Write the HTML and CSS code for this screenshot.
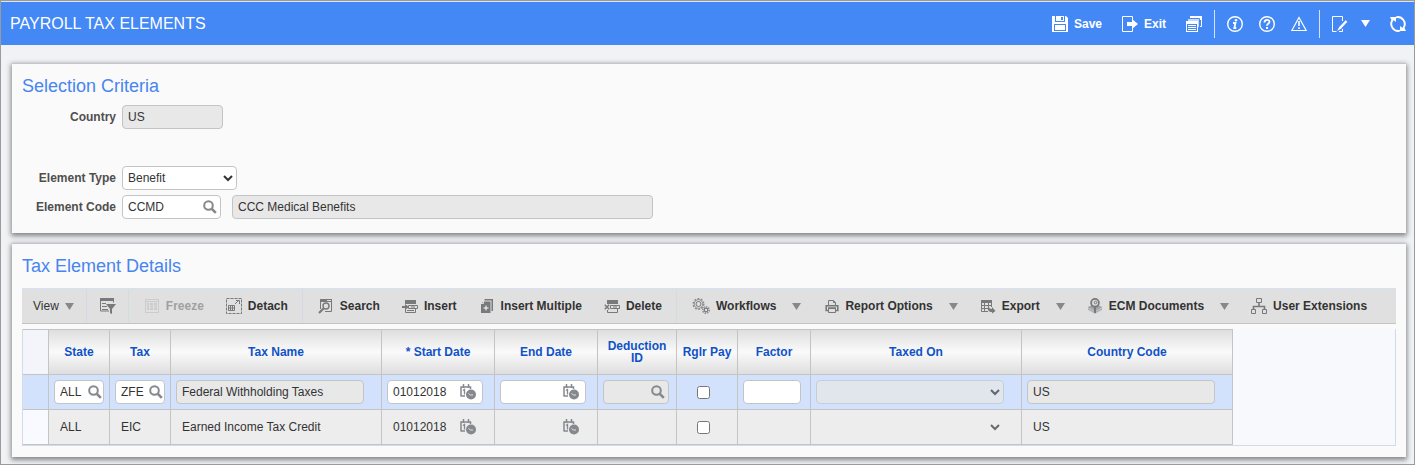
FILE: index.html
```html
<!DOCTYPE html>
<html lang="en">
<head>
  <meta charset="utf-8">
  <meta name="viewport" content="width=device-width, initial-scale=1">
  <title>Payroll Tax Elements</title>
  <link rel="stylesheet" href="styles.css">
</head>
<body>
  <!-- shared icons -->
  <svg class="defs" width="0" height="0">
    <symbol id="search" viewBox="0 0 14 14">
      <circle cx="5.5" cy="5.5" r="4.3" fill="none" stroke="currentColor" stroke-width="2"/>
      <path d="M8.8 8.8l4 4" stroke="currentColor" stroke-width="2.6"/>
    </symbol>
    <symbol id="calendar" viewBox="0 0 16 16">
      <path d="M1 12.500V3h9.500v2M1 12h4M3.500 0v4M8.500 0v4" fill="none" stroke="currentColor" stroke-width="1.500"/>
      <path d="M3 6.500l1.500-1v5" fill="none" stroke="currentColor" stroke-width="1.300"/>
      <circle cx="11" cy="10.500" r="5" fill="currentColor"/>
      <path d="M8.500 9.500l2 1.500h2.500" fill="none" stroke="#e0e2e4"/>
    </symbol>
    <symbol id="down" viewBox="0 0 9 7">
      <path d="M0 0h9L4.500 7z" fill="currentColor"/>
    </symbol>
  </svg>

  <header class="topbar">
    <h1>PAYROLL TAX ELEMENTS</h1>
    <nav class="actions">
      <button type="button" class="action">
        <svg width="16" height="16" viewBox="0 0 16 16"><path fill="#fff" d="M0 0h14l2 2v14H0z"/><path fill="#4388f5" d="M3 0h1v5h-1zM12 0h1v5h-1zM3 5h10v1H3zM9 1h2v3H9zM2 8h12v1H2zM2 9h1v6H2zM3 14h10v1H3zM13 9h1v6h-1z"/></svg>
        Save
      </button>
      <button type="button" class="action">
        <svg width="16" height="16" viewBox="0 0 16 16"><path d="M10.500 4V.5H.5v15h10V12" fill="none" stroke="#fff"/><path fill="#fff" d="M5 6h5V3l6 5-6 5v-3H5z"/></svg>
        Exit
      </button>
      <button type="button" class="action" aria-label="Windows">
        <svg width="16" height="16" viewBox="0 0 16 16"><path fill="#fff" d="M4 0h12v4H4z"/><path d="M14 10.500h1.500V4" fill="none" stroke="#fff"/><path fill="#c5dafc" d="M2 3h11v8H2z"/><path d="M2 2.500h11.500V12" fill="none" stroke="#4388f5"/><path fill="#fff" d="M0 5h12v11H0z"/><path fill="#4388f5" d="M1 8h10v7H1z"/><path d="M2 9.500h8M2 11.500h8M2 13.500h8" stroke="#fff"/></svg>
      </button>
      <span class="rule"></span>
      <button type="button" class="action" aria-label="Information">
        <svg width="16" height="16" viewBox="0 0 16 16"><circle cx="8" cy="8" r="7.300" fill="none" stroke="#fff" stroke-width="1.400"/><circle cx="9" cy="4.300" r="1.300" fill="#fff"/><path d="M6 7h2.500l-1.200 5h2" fill="none" stroke="#fff" stroke-width="1.800"/></svg>
      </button>
      <button type="button" class="action" aria-label="Help">
        <svg width="16" height="16" viewBox="0 0 16 16"><circle cx="8" cy="8" r="7.300" fill="none" stroke="#fff" stroke-width="1.400"/><path d="M5.500 6.500C5.500 3 10.700 3.200 10.500 6 10.400 7.500 8 7.700 8 9.800" fill="none" stroke="#fff" stroke-width="1.800"/><path d="M7 11h2v2H7z" fill="#fff"/></svg>
      </button>
      <button type="button" class="action" aria-label="Warnings">
        <svg width="16" height="16" viewBox="0 0 16 16"><path d="M8 1.500L15.200 14.500H.8z" fill="none" stroke="#fff" stroke-width="1.200"/><path d="M8 5v5M8 11.300v1.700" stroke="#fff" stroke-width="1.600"/></svg>
      </button>
      <span class="rule"></span>
      <button type="button" class="action more" aria-label="Edit page">
        <svg width="16" height="16" viewBox="0 0 16 16"><path d="M10.500 5V.5H.5v15h4M7 15.500h3.500V13" fill="none" stroke="#fff"/><path d="M14.500 5L8 12" stroke="#fff" stroke-width="2.400"/><path d="M7.500 10.500L5 15l4.500-2.500z" fill="#fff"/></svg>
        <svg width="9" height="7"><use href="#down"/></svg>
      </button>
      <button type="button" class="action" aria-label="Refresh">
        <svg width="16" height="16" viewBox="0 0 16 16"><path d="M6 1.300A7 7 0 0 1 13.500 12M10 14.700A7 7 0 0 1 2.500 4" fill="none" stroke="#fff" stroke-width="1.900"/><path d="M0 1h6v5L4 4.500 1.500 4zM16 15h-6v-5l2 1.500 2.500.5z" fill="#fff"/></svg>
      </button>
    </nav>
  </header>

  <main>
    <section class="panel criteria">
      <h2>Selection Criteria</h2>
      <div class="form-row country">
        <label for="country">Country</label>
        <input class="field" id="country" value="US" readonly>
      </div>
      <div class="form-row">
        <label for="type">Element Type</label>
        <select class="field" id="type"><option>Benefit</option></select>
      </div>
      <div class="form-row">
        <label for="code">Element Code</label>
        <div class="field lookup code">
          <input id="code" value="CCMD">
          <button type="button" aria-label="Find element code"><svg width="14" height="14"><use href="#search"/></svg></button>
        </div>
        <input class="field description" value="CCC Medical Benefits" aria-label="Element description" readonly>
      </div>
    </section>

    <section class="panel details">
      <h2>Tax Element Details</h2>
      <div class="toolbar">
        <button type="button" class="tool view">View <svg class="arrow" width="9" height="7"><use href="#down"/></svg></button>
        <span class="sep"></span>
        <button type="button" class="tool" aria-label="Query by example">
          <svg width="16" height="16" viewBox="0 0 16 16"><path d="M.5.500h13v4M.5 1v12H9" fill="none" stroke="currentColor"/><path d="M0 0h14v3H0z" fill="currentColor"/><path d="M2 5.500h4M2 8.500h5M2 11.500h6" stroke="currentColor"/><path d="M6 6h10l-4 5v5l-2-1v-4z" fill="currentColor"/></svg>
        </button>
        <span class="sep"></span>
        <button type="button" class="tool" disabled>
          <svg width="16" height="16" viewBox="0 0 16 16"><path d="M1.500 1.500h13v13h-13zM2 3.500h12" fill="none" stroke="currentColor"/><path d="M3 6h2M3 8.500h2M3 11h2M6 6h3M6 8.500h3M6 11h3M10 6h3M10 8.500h3M10 11h3" stroke="currentColor" stroke-width="2"/></svg>
          Freeze
        </button>
        <button type="button" class="tool">
          <svg width="16" height="16" viewBox="0 0 16 16"><path d="M.5.500h15v15H.5z" fill="none" stroke="currentColor" stroke-dasharray="3 1"/><path d="M2.500 7.500h6v5h-6zM2 10h7M4.500 7v6M6.500 7v6M9 6l4-4M10 2.500h3.500V6" fill="none" stroke="currentColor"/></svg>
          Detach
        </button>
        <span class="sep"></span>
        <button type="button" class="tool">
          <svg width="16" height="16" viewBox="0 0 16 16"><path d="M2.500 11V1.500h11v12H7" fill="none" stroke="currentColor"/><path d="M2 1h12v3H2z" fill="currentColor"/><path d="M9 2.500h4" stroke="#e0e0e0"/><circle cx="8" cy="8" r="3" fill="#e0e0e0" stroke="currentColor" stroke-width="1.400"/><path d="M5.500 10.500L1 15" stroke="currentColor" stroke-width="2.200"/></svg>
          Search
        </button>
        <button type="button" class="tool">
          <svg width="16" height="16" viewBox="0 0 16 16"><path d="M3 2h11v4H3z" fill="currentColor"/><path d="M6.500 7.500h9v3h-9zM3.500 11v3.500h10V11M9 9h4M5 12.500h7" fill="none" stroke="currentColor"/><path d="M0 8h3V6l4 3-4 3v-2H0z" fill="currentColor"/></svg>
          Insert
        </button>
        <button type="button" class="tool">
          <svg width="16" height="16" viewBox="0 0 16 16"><path d="M5.500 1H14v12h-1.500V2.500h-7z" fill="currentColor"/><path d="M4.500 3.500h7V15H2V6z" fill="currentColor"/><path d="M7 7.500v5M4.500 10h5" stroke="#fff"/><path d="M2 5.500h2.500V3" stroke="#e0e0e0" fill="none"/></svg>
          Insert Multiple
        </button>
        <button type="button" class="tool">
          <svg width="16" height="16" viewBox="0 0 16 16"><path d="M3 2h11v4H3z" fill="currentColor"/><path d="M6.500 7.500h9v3h-9zM3.500 12v2.500h10V11M9 9h4" fill="none" stroke="currentColor"/><path d="M.8 6.800l4.400 4.400M5.200 6.800L.8 11.200" stroke="currentColor" stroke-width="1.500"/></svg>
          Delete
        </button>
        <span class="sep"></span>
        <button type="button" class="tool">
          <svg width="18" height="16" viewBox="0 0 18 16"><circle cx="6.500" cy="6" r="5.200" fill="none" stroke="currentColor" stroke-width="1.600" stroke-dasharray="1.800 1.470" opacity=".8"/><circle cx="6.500" cy="6" r="4.300" fill="none" stroke="currentColor" opacity=".7"/><circle cx="6.500" cy="6" r="2.500" fill="none" stroke="currentColor"/><circle cx="14" cy="12" r="3.300" fill="none" stroke="currentColor" stroke-width="1.500" stroke-dasharray="1.500 1" opacity=".8"/><circle cx="14" cy="12" r="1.800" fill="none" stroke="currentColor" stroke-width="1.200"/></svg>
          Workflows
          <svg class="arrow menu" width="9" height="7"><use href="#down"/></svg>
        </button>
        <button type="button" class="tool">
          <svg width="16" height="16" viewBox="0 0 16 16"><path d="M5.500 7V2.500h5l2 2V7M10.500 2.500v2h2M5.500 10.500h7v4h-7z" fill="none" stroke="currentColor"/><path d="M5 12.500H3.200V7.700h11.600v4.800H13M5 10h8" fill="none" stroke="currentColor" stroke-width="1.600"/></svg>
          Report Options
          <svg class="arrow menu" width="9" height="7"><use href="#down"/></svg>
        </button>
        <button type="button" class="tool">
          <svg width="16" height="16" viewBox="0 0 16 16"><path d="M1 2h11v3H1z" fill="currentColor"/><path d="M1.500 4v9.500H8M4.500 5v9M8.500 5v4M11.500 5v4M1 7.500h11M1 10.500h7" fill="none" stroke="currentColor"/><path d="M8 8c1 2 2 3 4 3V9l3.500 4-3.500 2.500V14c-3 0-5-2-4-6z" fill="currentColor"/></svg>
          Export
          <svg class="arrow menu" width="9" height="7"><use href="#down"/></svg>
        </button>
        <button type="button" class="tool">
          <svg width="16" height="16" viewBox="0 0 16 16"><path d="M1 9l4-2 3 2 3-2 4 2v3l-7 4-7-4z" fill="currentColor" opacity=".6"/><path d="M1 10l7 3.500 7-3.500M1 12l7 3.500 7-3.500" fill="none" stroke="#e0e0e0" stroke-width=".7"/><circle cx="8" cy="4.800" r="3.900" fill="#ddd" stroke="currentColor" stroke-width="1.800"/><circle cx="8.500" cy="4.500" r="1.300" fill="none" stroke="currentColor"/><path d="M8 8.500V15" stroke="currentColor" stroke-width="2"/></svg>
          ECM Documents
          <svg class="arrow menu" width="9" height="7"><use href="#down"/></svg>
        </button>
        <button type="button" class="tool">
          <svg width="16" height="16" viewBox="0 0 16 16"><path d="M5.500.500h5v4h-5zM.5 11.500h4v4h-4zM11.500 11.500h4v4h-4z" fill="none" stroke="currentColor"/><path d="M8 5v3.500M2.500 11V8.500h11V11" fill="none" stroke="currentColor" stroke-width="1.600"/></svg>
          User Extensions
        </button>
      </div>

      <div class="grid">
        <table>
          <colgroup>
            <col class="c-handle"><col class="c-code"><col class="c-code"><col class="c-wide"><col class="c-start"><col class="c-end">
            <col class="c-deduction"><col class="c-code"><col class="c-factor"><col class="c-wide"><col class="c-wide">
          </colgroup>
          <thead>
            <tr>
              <td></td><th>State</th><th>Tax</th><th>Tax Name</th><th>* Start Date</th><th>End Date</th>
              <th>Deduction ID</th><th>Rglr Pay</th><th>Factor</th><th>Taxed On</th><th>Country Code</th>
            </tr>
          </thead>
          <tbody>
            <tr class="selected">
              <td></td>
              <td><div class="field lookup short"><input value="ALL" aria-label="State"><button type="button" aria-label="Find state"><svg width="14" height="14"><use href="#search"/></svg></button></div></td>
              <td><div class="field lookup short"><input value="ZFE" aria-label="Tax"><button type="button" aria-label="Find tax"><svg width="14" height="14"><use href="#search"/></svg></button></div></td>
              <td><input class="field name" value="Federal Withholding Taxes" aria-label="Tax name" readonly></td>
              <td><div class="field lookup date"><input value="01012018" aria-label="Start date"><button type="button" aria-label="Pick start date"><svg width="16" height="16"><use href="#calendar"/></svg></button></div></td>
              <td><div class="field lookup date end"><input aria-label="End date"><button type="button" aria-label="Pick end date"><svg width="16" height="16"><use href="#calendar"/></svg></button></div></td>
              <td><div class="field lookup deduction"><input aria-label="Deduction ID" readonly><button type="button" aria-label="Find deduction"><svg width="14" height="14"><use href="#search"/></svg></button></div></td>
              <td><input type="checkbox" aria-label="Regular pay"></td>
              <td><input class="field factor" aria-label="Factor"></td>
              <td><select class="field name" aria-label="Taxed on" disabled><option></option></select></td>
              <td><input class="field name" value="US" aria-label="Country code" readonly></td>
            </tr>
            <tr class="plain">
              <td></td>
              <td><input class="field short" value="ALL" aria-label="State" readonly></td>
              <td><input class="field short" value="EIC" aria-label="Tax" readonly></td>
              <td><input class="field name" value="Earned Income Tax Credit" aria-label="Tax name" readonly></td>
              <td><div class="field lookup date"><input value="01012018" aria-label="Start date"><button type="button" aria-label="Pick start date"><svg width="16" height="16"><use href="#calendar"/></svg></button></div></td>
              <td><div class="field lookup date end"><input aria-label="End date"><button type="button" aria-label="Pick end date"><svg width="16" height="16"><use href="#calendar"/></svg></button></div></td>
              <td></td>
              <td><input type="checkbox" aria-label="Regular pay"></td>
              <td></td>
              <td><select class="field name" aria-label="Taxed on" disabled><option></option></select></td>
              <td><input class="field name" value="US" aria-label="Country code" readonly></td>
            </tr>
          </tbody>
        </table>
      </div>
    </section>
  </main>
</body>
</html>
```
FILE: styles.css
```css
* {
  box-sizing: border-box;
}
body {
  margin: 0;
  min-height: 100vh;
  border: 1px solid #9b9b9b;
  background: #f1f2f5;
  color: #333;
  font-family: "Liberation Sans", Arial, sans-serif;
  font-size: 12px;
}
svg {
  display: block;
  flex: none;
}
.defs {
  position: absolute;
}
button, input, select {
  font: inherit;
  color: inherit;
}
button {
  padding: 0;
  border: 0;
  background: none;
  cursor: pointer;
}

/* top bar */
.topbar {
  display: flex;
  align-items: center;
  justify-content: space-between;
  height: 44px;
  padding: 0 8px 0 9px;
  border-top: 1px solid #dfe3ea;
  background: #4388f5;
  color: #fff;
}
h1 {
  margin: 0;
  font-size: 16px;
  font-weight: normal;
}
.actions {
  display: flex;
  align-items: center;
  gap: 16px;
}
.action {
  display: flex;
  align-items: center;
  gap: 6px;
  font-weight: bold;
}
.action:nth-child(-n+2) {
  margin-right: 4px;
}
.rule {
  width: 1px;
  height: 28px;
  margin: 0 -4px;
  background: #d5e4fd;
}
.more {
  gap: 13px;
  margin-right: 4px;
}

/* panels */
main {
  display: flex;
  flex-direction: column;
  gap: 10px;
  padding: 18px 8px 7px 11px;
}
.panel {
  padding: 12px 10px;
  border-top: 1px solid #c4c6c9;
  background: #fafafa;
  box-shadow: 0 2px 5px 1px rgba(0, 0, 0, 0.45);
}
.criteria {
  padding-bottom: 14px;
}
.details {
  padding-bottom: 11px;
}
h2 {
  margin: 0;
  color: #4785f0;
  font-size: 18px;
  font-weight: normal;
  line-height: 20px;
}

/* form */
.form-row {
  display: flex;
  align-items: center;
  gap: 6px;
  margin-top: 5px;
}
.form-row label {
  width: 94px;
  color: #4f4f4f;
  font-weight: bold;
  text-align: right;
}
.country {
  margin: 9px 0 37px;
}
.field {
  display: block;
  height: 24px;
  padding: 0 5px;
  border: 1px solid #c4c4c4;
  border-radius: 4px;
  background: #fff;
}
input.field[readonly],
.deduction {
  background: #e8e8e8;
}
select.field {
  padding: 0 1px;
}
#country {
  width: 101px;
}
#type {
  width: 115px;
}
.code {
  width: 99px;
}
.description {
  width: 421px;
  margin-left: 5px;
}
.lookup {
  display: flex;
  align-items: center;
  padding-right: 3px;
}
.lookup input {
  flex: 1;
  min-width: 0;
  padding: 0;
  border: 0;
  background: none;
}
.lookup button {
  color: #85888c;
}

/* toolbar */
.toolbar {
  display: flex;
  align-items: center;
  gap: 22px;
  height: 36px;
  margin-top: 12px;
  padding-left: 11px;
  border-top: 1px solid #d5e1f3;
  border-bottom: 1px solid #c4c4c4;
  background: #e0e0e0;
}
.tool {
  display: flex;
  align-items: center;
  gap: 6px;
  font-weight: bold;
  white-space: nowrap;
}
.tool svg {
  color: #77797b;
}
.tool .arrow {
  color: #85888c;
}
.tool .menu {
  margin-left: 10px;
}
.view {
  font-weight: normal;
}
.tool:disabled {
  color: #a0a0a0;
}
.tool:disabled svg {
  color: #ccc;
}
.sep {
  width: 1px;
  height: 32px;
  margin: 0 -7px 0 -8px;
  background: #d3dbe2;
}
.view + .sep,
.sep:nth-child(4) {
  margin-left: -10px;
}
.view + .sep {
  margin-right: -9px;
}

/* table */
.grid {
  margin-top: 5px;
  border: 1px solid #d3dbe8;
  border-top: 0;
  background: #f8f9fd;
}
table {
  width: 1210px;
  table-layout: fixed;
  border-collapse: separate;
  border-spacing: 0;
}
.c-handle { width: 26px; }
.c-code { width: 61px; }
.c-wide { width: 211px; }
.c-start { width: 113px; }
.c-end { width: 103px; }
.c-deduction { width: 79px; }
.c-factor { width: 73px; }
th, td {
  padding: 5px;
  border-right: 1px solid #c4c4c4;
  border-bottom: 1px solid #c4c4c4;
}
thead th, thead td {
  height: 46px;
  border-top: 1px solid #c4c4c4;
}
thead td {
  background: #f3f5fa;
}
th {
  background: linear-gradient(#dedede, #fafafa 50%, #dedede);
  color: #0f52c8;
  line-height: 12px;
}
.selected td {
  background: #d3e2fc;
}
.plain td {
  height: 35px;
  background: #ededed;
}
.plain td:first-child {
  background: #f9faff;
}
.plain .field,
.plain input.field[readonly] {
  border-color: transparent;
  background: none;
}
.short {
  width: 50px;
}
.short.lookup {
  padding-right: 1px;
}
.name {
  width: 188px;
}
select.name {
  background: #e8e8e8;
}
.date {
  width: 96px;
  padding-right: 6px;
}
.end {
  width: 86px;
}
.deduction {
  width: 66px;
}
.factor {
  width: 58px;
}
input[type="checkbox"] {
  display: block;
  width: 13px;
  height: 13px;
  margin: 0 15px;
}
```
